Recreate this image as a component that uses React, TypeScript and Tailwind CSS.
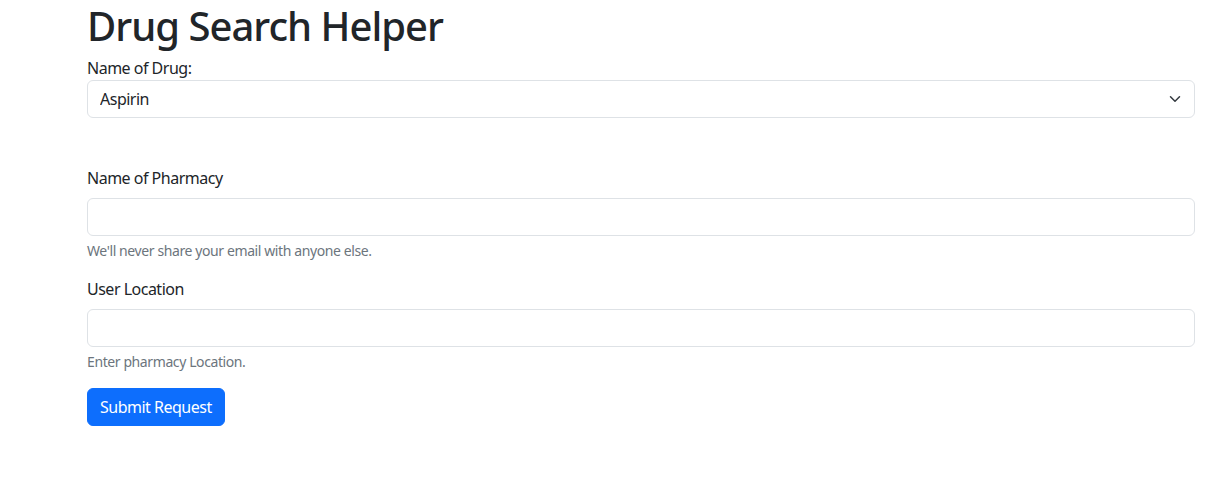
const Chevron = () => (
  <svg
    className="pointer-events-none absolute right-3 top-1/2 -translate-y-1/2"
    width="16"
    height="12"
    viewBox="0 0 16 16"
    fill="none"
  >
    <path d="m2 5 6 6 6-6" stroke="#343a40" strokeWidth="2" strokeLinecap="round" strokeLinejoin="round" />
  </svg>
);

const App = () => {
  return (
    <div className="min-h-screen bg-white text-[#212529] font-['Noto_Sans',sans-serif] tracking-[-0.5px]">
      <div className="ml-[87px] mr-[26px]">
        <h1 className="mb-2 pt-[3px] text-[40px] leading-[45px] font-medium tracking-[-1px]">Drug Search Helper</h1>

        <form onSubmit={(e) => e.preventDefault()}>
          <label htmlFor="drug" className="block text-base leading-6">
            Name of Drug:
          </label>
          <div className="relative">
            <select
              id="drug"
              defaultValue="Aspirin"
              className="block h-[38px] w-full appearance-none rounded-md border border-[#dee2e6] bg-white py-1.5 pl-3 pr-9 text-base leading-6 tracking-[-0.5px] text-[#212529] outline-none"
            >
              <option>Aspirin</option>
              <option>Ibuprofen</option>
              <option>Acetaminophen</option>
            </select>
            <Chevron />
          </div>

          <div className="mt-12 mb-4">
            <label htmlFor="pharmacy" className="mb-2 block text-base leading-6">
              Name of Pharmacy
            </label>
            <input
              id="pharmacy"
              type="text"
              className="block h-[38px] w-full rounded-md border border-[#dee2e6] bg-white px-3 py-1.5 text-base leading-6 outline-none"
            />
            <div className="mt-1 text-sm leading-[21px] tracking-[-0.4px] text-[#6c757d]">
              We'll never share your email with anyone else.
            </div>
          </div>

          <div className="mb-4">
            <label htmlFor="location" className="mb-2 block text-base leading-6">
              User Location
            </label>
            <input
              id="location"
              type="text"
              className="block h-[38px] w-full rounded-md border border-[#dee2e6] bg-white px-3 py-1.5 text-base leading-6 outline-none"
            />
            <div className="mt-1 text-sm leading-[21px] tracking-[-0.4px] text-[#6c757d]">Enter pharmacy Location.</div>
          </div>

          <button
            type="submit"
            className="h-[38px] rounded-md border border-[#0d6efd] bg-[#0d6efd] px-3 py-1.5 text-base leading-6 tracking-[-0.5px] text-white"
          >
            Submit Request
          </button>
        </form>
      </div>
    </div>
  );
};

export default App;
